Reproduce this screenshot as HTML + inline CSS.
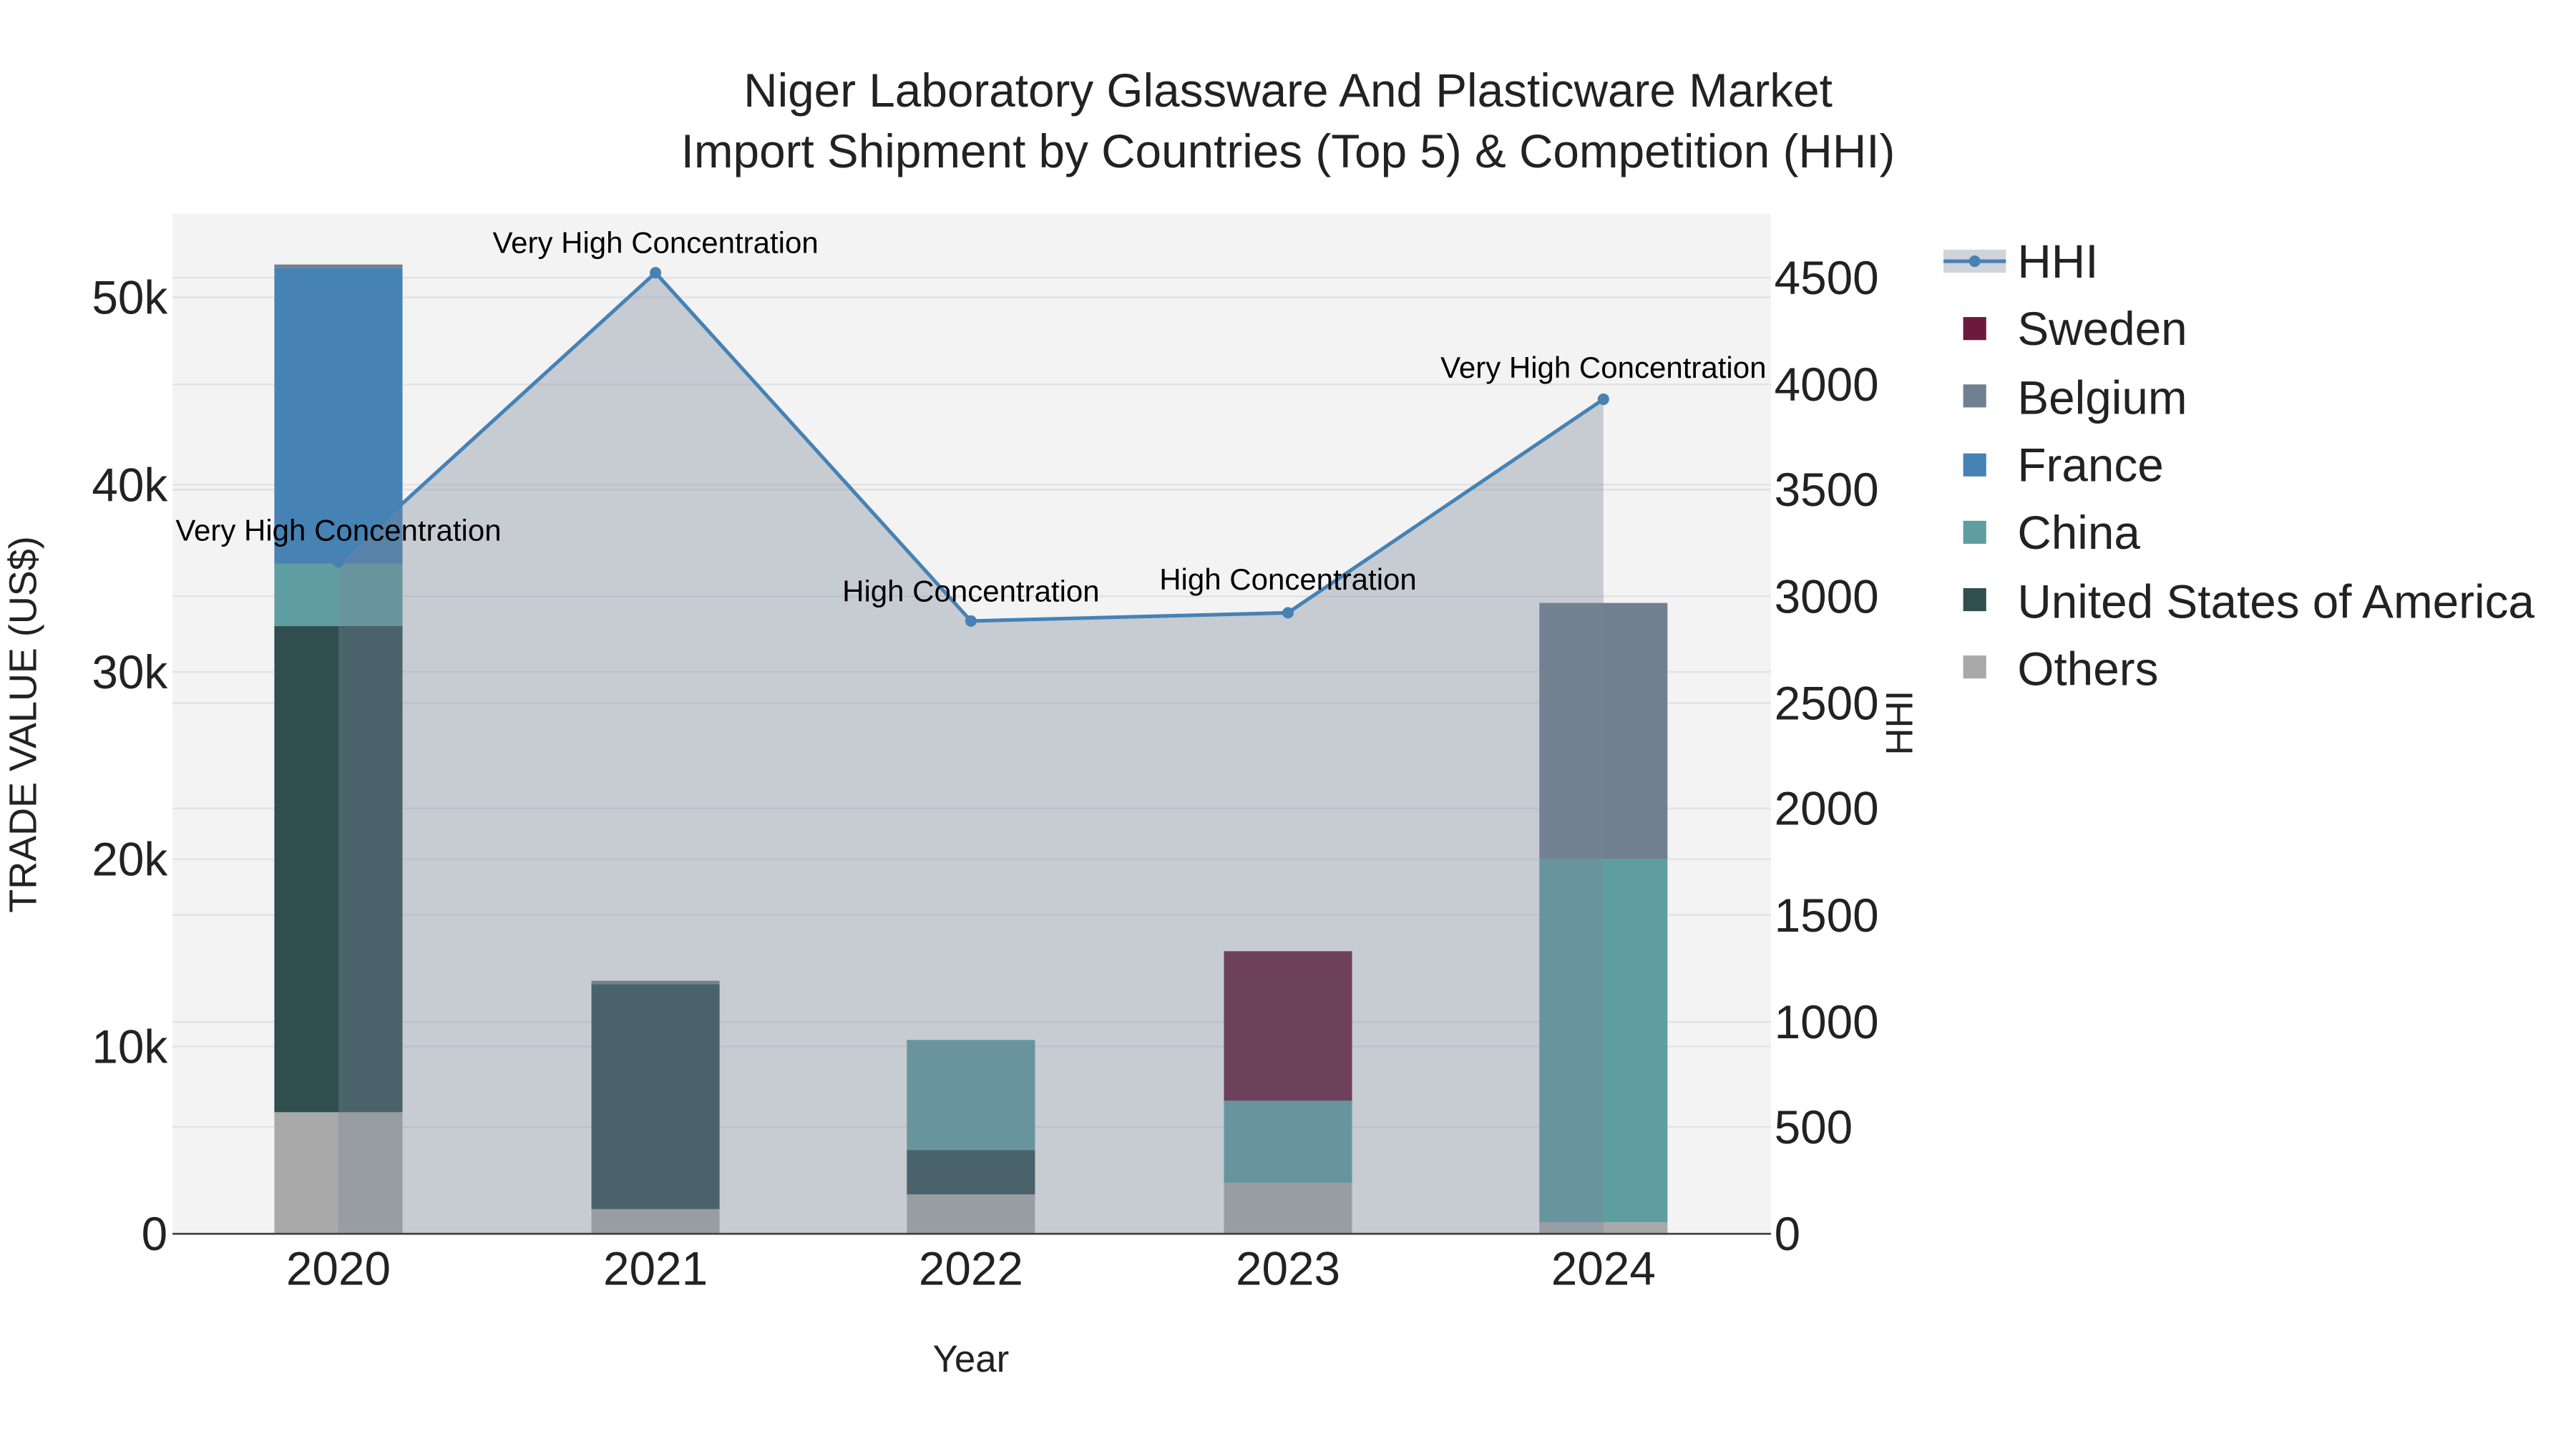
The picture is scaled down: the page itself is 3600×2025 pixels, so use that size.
<!DOCTYPE html>
<html><head><meta charset="utf-8"><style>
html,body{margin:0;padding:0;background:#fff;}
svg{display:block;}
text{font-family:"Liberation Sans",Arial,sans-serif;}
</style></head><body>
<svg width="3600" height="2025" viewBox="0 0 1568 882" xmlns="http://www.w3.org/2000/svg">
<rect x="0" y="0" width="1568" height="882" fill="#fff"/>
<rect x="105" y="130" width="973" height="621" fill="#f3f3f3"/>
<g stroke="#e2e2e2" stroke-width="1">
<line x1="105" x2="1078" y1="637" y2="637"/>
<line x1="105" x2="1078" y1="523" y2="523"/>
<line x1="105" x2="1078" y1="409" y2="409"/>
<line x1="105" x2="1078" y1="295" y2="295"/>
<line x1="105" x2="1078" y1="181" y2="181"/>
<line x1="105" x2="1078" y1="686" y2="686"/>
<line x1="105" x2="1078" y1="622" y2="622"/>
<line x1="105" x2="1078" y1="557" y2="557"/>
<line x1="105" x2="1078" y1="492" y2="492"/>
<line x1="105" x2="1078" y1="428" y2="428"/>
<line x1="105" x2="1078" y1="363" y2="363"/>
<line x1="105" x2="1078" y1="298" y2="298"/>
<line x1="105" x2="1078" y1="234" y2="234"/>
<line x1="105" x2="1078" y1="169" y2="169"/>
</g>
<g>
<rect x="167" y="677" width="78" height="74" fill="#a9a9a9"/>
<rect x="167" y="381" width="78" height="296" fill="#2f4f4f"/>
<rect x="167" y="343" width="78" height="38" fill="#5f9ea0"/>
<rect x="167" y="163" width="78" height="180" fill="#4682b4"/>
<rect x="167" y="161" width="78" height="2" fill="#708090"/>

<rect x="360" y="736" width="78" height="15" fill="#a9a9a9"/>
<rect x="360" y="599" width="78" height="137" fill="#2f4f4f"/>
<rect x="360" y="597" width="78" height="2" fill="#708090"/>

<rect x="552" y="727" width="78" height="24" fill="#a9a9a9"/>
<rect x="552" y="700" width="78" height="27" fill="#2f4f4f"/>
<rect x="552" y="633" width="78" height="67" fill="#5f9ea0"/>

<rect x="745" y="720" width="78" height="31" fill="#a9a9a9"/>
<rect x="745" y="670" width="78" height="50" fill="#5f9ea0"/>
<rect x="745" y="579" width="78" height="91" fill="#661a3a"/>

<rect x="937" y="744" width="78" height="7" fill="#a9a9a9"/>
<rect x="937" y="523" width="78" height="221" fill="#5f9ea0"/>
<rect x="937" y="367" width="78" height="156" fill="#708090"/>
</g>
<polygon points="206,751 206,342 399,166 591,378 784,373 976,243 976,751" fill="rgba(123,134,153,0.36)"/>
<polyline points="206,342 399,166 591,378 784,373 976,243" fill="none" stroke="#4682b4" stroke-width="2.2"/>
<g fill="#4682b4">
<circle cx="206" cy="342" r="3.5"/><circle cx="399" cy="166" r="3.5"/><circle cx="591" cy="378" r="3.5"/><circle cx="784" cy="373" r="3.5"/><circle cx="976" cy="243" r="3.5"/>
</g>
<line x1="105" x2="1078" y1="751" y2="751" stroke="#444" stroke-width="1.2"/>
<g font-size="18.3" fill="#000" text-anchor="middle">
<text x="206" y="329">Very High Concentration</text>
<text x="399" y="154">Very High Concentration</text>
<text x="591" y="366">High Concentration</text>
<text x="784" y="359">High Concentration</text>
<text x="976" y="230">Very High Concentration</text>
</g>
<g font-size="28.6" fill="#222" text-anchor="middle">
<text x="784" y="65">Niger Laboratory Glassware And Plasticware Market</text>
<text x="784" y="102">Import Shipment by Countries (Top 5) &amp; Competition (HHI)</text>
</g>
<g font-size="28.6" fill="#222" text-anchor="end">
<text x="102" y="761">0</text>
<text x="102" y="647">10k</text>
<text x="102" y="533">20k</text>
<text x="102" y="419">30k</text>
<text x="102" y="305">40k</text>
<text x="102" y="191">50k</text>
</g>
<g font-size="28.6" fill="#222" text-anchor="start">
<text x="1080" y="761">0</text>
<text x="1080" y="696">500</text>
<text x="1080" y="632">1000</text>
<text x="1080" y="567">1500</text>
<text x="1080" y="502">2000</text>
<text x="1080" y="438">2500</text>
<text x="1080" y="373">3000</text>
<text x="1080" y="308">3500</text>
<text x="1080" y="244">4000</text>
<text x="1080" y="179">4500</text>
</g>
<g font-size="28.6" fill="#222" text-anchor="middle">
<text x="206" y="782">2020</text>
<text x="399" y="782">2021</text>
<text x="591" y="782">2022</text>
<text x="784" y="782">2023</text>
<text x="976" y="782">2024</text>
</g>
<text x="591" y="835" font-size="23" fill="#222" text-anchor="middle">Year</text>
<text transform="translate(22,441) rotate(-90)" font-size="23.5" fill="#222" text-anchor="middle">TRADE VALUE (US$)</text>
<text transform="translate(1164,440) rotate(-90)" font-size="23" fill="#222" text-anchor="middle">HHI</text>
<rect x="1183" y="152" width="38" height="14" fill="rgba(123,134,153,0.36)"/>
<line x1="1183" x2="1221" y1="159" y2="159" stroke="#4682b4" stroke-width="2.2"/>
<circle cx="1202" cy="159" r="3.5" fill="#4682b4"/>
<g>
<rect x="1195" y="193" width="14" height="14" fill="#6b1a3d"/>
<rect x="1195" y="234" width="14" height="14" fill="#708090"/>
<rect x="1195" y="276" width="14" height="14" fill="#4682b4"/>
<rect x="1195" y="317" width="14" height="14" fill="#5f9ea0"/>
<rect x="1195" y="358" width="14" height="14" fill="#2f4f4f"/>
<rect x="1195" y="399" width="14" height="14" fill="#a9a9a9"/>
</g>
<g font-size="28.6" fill="#222">
<text x="1228" y="169">HHI</text>
<text x="1228" y="210">Sweden</text>
<text x="1228" y="252">Belgium</text>
<text x="1228" y="293">France</text>
<text x="1228" y="334">China</text>
<text x="1228" y="376">United States of America</text>
<text x="1228" y="417">Others</text>
</g>
</svg>
</body></html>
